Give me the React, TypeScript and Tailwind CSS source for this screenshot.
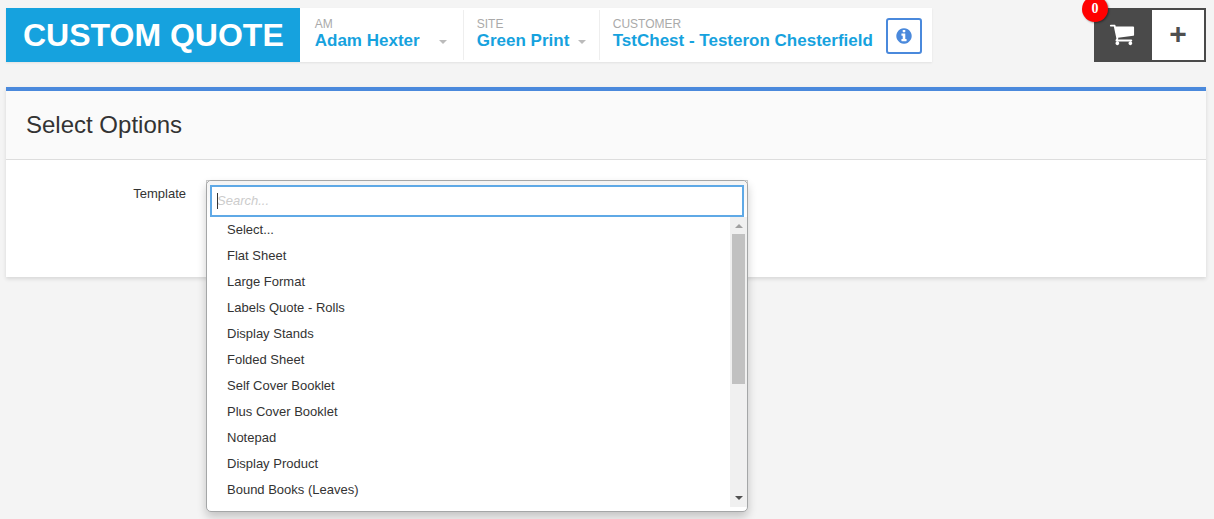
import { useState } from 'react';

const TEMPLATES = [
  'Select...',
  'Flat Sheet',
  'Large Format',
  'Labels Quote - Rolls',
  'Display Stands',
  'Folded Sheet',
  'Self Cover Booklet',
  'Plus Cover Booklet',
  'Notepad',
  'Display Product',
  'Bound Books (Leaves)',
];

function InfoIcon() {
  return (
    <svg viewBox="0 0 1792 1792" className="w-[18px] h-[18px]" fill="currentColor" aria-hidden="true">
      <path d="M1152 1376v-160q0-14-9-23t-23-9h-96v-512q0-14-9-23t-23-9h-320q-14 0-23 9t-9 23v160q0 14 9 23t23 9h96v320h-96q-14 0-23 9t-9 23v160q0 14 9 23t23 9h448q14 0 23-9t9-23zm-128-896v-160q0-14-9-23t-23-9h-192q-14 0-23 9t-9 23v160q0 14 9 23t23 9h192q14 0 23-9t9-23zm640 416q0 209-103 385.5t-279.5 279.5-385.5 103-385.5-103-279.5-279.5-103-385.5 103-385.5 279.5-279.5 385.5-103 385.5 103 279.5 279.5 103 385.5z" />
    </svg>
  );
}

function CartIcon() {
  return (
    <svg viewBox="0 0 1792 1792" className="w-[26px] h-[26px]" fill="currentColor" aria-hidden="true">
      <path d="M704 1536q0 52-38 90t-90 38-90-38-38-90 38-90 90-38 90 38 38 90zm896 0q0 52-38 90t-90 38-90-38-38-90 38-90 90-38 90 38 38 90zm128-1088v512q0 24-16.5 42.5t-40.5 21.5l-1044 122q13 60 13 70 0 16-24 64h920q26 0 45 19t19 45-19 45-45 19h-1024q-26 0-45-19t-19-45q0-11 8-31.5t16-36 21.5-40 15.5-29.5l-177-823h-204q-26 0-45-19t-19-45 19-45 45-19h256q16 0 28.5 6.5t19.5 15.5 13 24.5 8 26 5.5 29.5 4.5 26h1201q26 0 45 19t19 45z" />
    </svg>
  );
}

interface HeaderSelectProps {
  id: string;
  label: string;
  value: string;
  className: string;
}

function HeaderSelect({ id, label, value, className }: HeaderSelectProps) {
  return (
    <div className={`my-0.5 pt-1.5 border-r border-[#eeeeee] ${className}`}>
      <label htmlFor={id} className="block text-xs leading-4 text-[#aaaaaa]">
        {label}
      </label>
      <div className="flex items-center justify-between">
        <select id={id} className="appearance-none bg-transparent text-[17px] leading-[18px] font-bold text-[#16a2de] outline-none cursor-pointer">
          <option>{value}</option>
        </select>
        <span className="mt-0.5 border-x-4 border-t-4 border-x-transparent border-t-[#bbbbbb] pointer-events-none"></span>
      </div>
    </div>
  );
}

function Header() {
  return (
    <header className="flex items-stretch justify-between h-[54px]">
      <div className="flex bg-white shadow-[0_1px_2px_rgba(0,0,0,0.08)]">
        <h1 className="flex items-center pl-[17px] pr-4 bg-[#16a2de] text-white text-[32px] font-bold whitespace-nowrap">
          CUSTOM QUOTE
        </h1>
        <HeaderSelect id="am" label="AM" value="Adam Hexter" className="w-[164px] pl-[15px] pr-4" />
        <HeaderSelect id="site" label="SITE" value="Green Print" className="w-[136px] pl-[13px] pr-[13px]" />
        <div className="flex items-center pl-[13px] pr-2.5 gap-[13px]">
          <div className="self-start pt-2 whitespace-nowrap">
            <div className="text-xs leading-4 text-[#aaaaaa]">CUSTOMER</div>
            <div className="text-[17px] leading-[18px] font-bold text-[#16a2de]">TstChest - Testeron Chesterfield</div>
          </div>
          <button
            aria-label="Customer info"
            className="flex items-center justify-center mt-0.5 w-9 h-9 border-2 border-[#4a89dc] rounded-[3px] text-[#4a89dc]"
          >
            <InfoIcon />
          </button>
        </div>
      </div>

      <div className="relative flex border-2 border-[#4a4a4a] bg-[#4a4a4a]">
        <button aria-label="Cart" className="flex items-center justify-center w-14 pr-1 pb-0.5 text-white">
          <CartIcon />
        </button>
        <button aria-label="Add" className="w-[52px] pb-0.5 bg-white text-[#4f4f4f] text-[30px] leading-[48px] font-bold">
          +
        </button>
        <span className="absolute -top-3.5 -left-3.5 flex items-center justify-center w-[26px] h-[26px] rounded-full bg-[#ff0000] text-white text-sm font-bold font-['Liberation_Serif',serif] shadow-[1px_1px_2px_rgba(0,0,0,0.4)]">
          0
        </span>
      </div>
    </header>
  );
}

function ScrollTrack() {
  return (
    <div className="flex flex-col items-center w-[17px] px-0.5 bg-[#f0f0f0]" aria-hidden="true">
      <span className="mt-[7px] border-x-4 border-b-4 border-x-transparent border-b-[#a0a0a0]"></span>
      <span className="mt-1.5 w-full h-[150px] bg-[#c1c1c1]"></span>
      <span className="mt-auto mb-[7px] border-x-4 border-t-4 border-x-transparent border-t-[#505050]"></span>
    </div>
  );
}

function TemplatePicker() {
  const [query, setQuery] = useState('');
  const [selected, setSelected] = useState('');
  const matches = TEMPLATES.filter((name) => name.toLowerCase().includes(query.toLowerCase()));

  return (
    <div className="relative w-[542px] h-8 border border-[#cccccc]">
      <div className="absolute -top-px -left-px w-[542px] pb-1 bg-white border border-[#a4a6a7] rounded-[5px] shadow-[0_5px_10px_rgba(0,0,0,0.2)]">
        <div className="relative pt-1 px-[3px] bg-linear-to-b from-[#f4f4f4] to-white rounded-t-[5px]">
          <input
            id="template"
            type="text"
            autoFocus
            autoComplete="off"
            placeholder="Search..."
            value={query}
            onChange={(e) => setQuery(e.target.value)}
            className="block w-full h-8 px-[5px] pb-0.5 bg-white border-2 border-[#5fa9e6] outline-none placeholder-shown:caret-transparent placeholder:italic placeholder:text-[#cccccc]"
          />
          {/* steady caret while the box is empty */}
          {query === '' && <span className="absolute left-2.5 top-3 w-px h-4 bg-[#333333] pointer-events-none"></span>}
        </div>
        <div className="flex h-[290px]">
          <ul className="flex-1 overflow-hidden">
            {matches.map((name) => (
              <li key={name}>
                <button
                  onClick={() => setSelected(name)}
                  aria-pressed={selected === name}
                  className="block w-full pl-5 text-left leading-[26px] hover:bg-[#eeeeee]"
                >
                  {name}
                </button>
              </li>
            ))}
          </ul>
          <ScrollTrack />
        </div>
      </div>
    </div>
  );
}

export default function App() {
  return (
    <div className="min-h-screen pt-2 pl-1.5 pr-2 overflow-hidden bg-[#f4f4f4] text-[13px] text-[#333333] font-['Liberation_Sans',Arial,sans-serif]">
      <Header />
      <main className="mt-[25px] bg-white border-t-4 border-[#4a89dc] shadow-[0_2px_4px_rgba(0,0,0,0.12)]">
        <div className="px-5 py-4 bg-[#fafafa] border-b border-[#dddddd]">
          <h2 className="text-2xl leading-9">Select Options</h2>
        </div>
        <div className="flex gap-5 px-5 pt-5 pb-[65px]">
          <label htmlFor="template" className="w-40 pt-1 text-right leading-5">
            Template
          </label>
          <TemplatePicker />
        </div>
      </main>
    </div>
  );
}
